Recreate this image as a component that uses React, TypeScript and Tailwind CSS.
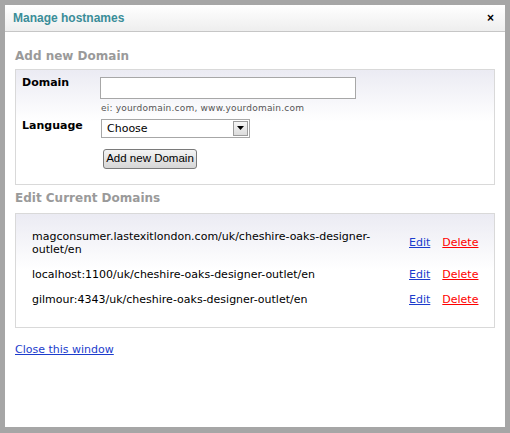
import React, { useState } from 'react';

const domains = [
  'magconsumer.lastexitlondon.com/uk/cheshire-oaks-designer-outlet/en',
  'localhost:1100/uk/cheshire-oaks-designer-outlet/en',
  'gilmour:4343/uk/cheshire-oaks-designer-outlet/en',
];

export default function App() {
  const [domain, setDomain] = useState('');
  const [lang, setLang] = useState('');

  return (
    <div className="w-[510px] h-[433px] bg-[#a6a6a6] pt-[5px] pl-[5px] pr-[5px] pb-[6px] font-['DejaVu_Sans',sans-serif]">
      <div className="h-full bg-white flex flex-col">
        {/* title bar */}
        <div className="h-[27px] shrink-0 flex items-center justify-between pl-[8px] pr-[11px] border-b border-[#c6c6c6] bg-gradient-to-b from-white to-[#eeeeee]">
          <span className="font-['Liberation_Sans',sans-serif] font-bold text-[12px] text-[#3a8d98]">Manage hostnames</span>
          <button className="font-['Liberation_Sans',sans-serif] font-bold text-[12px] leading-none text-black">×</button>
        </div>

        <div className="px-[10px] pt-[16px]">
          <h2 className="font-bold text-[12px] text-[#9a9a9a] leading-[16px]">Add new Domain</h2>

          <div className="mt-[5px] border border-[#d9d9d9] bg-gradient-to-b from-[#ebebf3] via-white via-[45%] to-white pl-[6px] pt-[6px] pb-[15px]">
            <div className="flex">
              <div className="w-[78px] font-bold text-[11px] text-black leading-[14px]">Domain</div>
              <div className="flex flex-col">
                <input
                  value={domain}
                  onChange={(e) => setDomain(e.target.value)}
                  className="w-[256px] h-[22px] mt-[1px] border border-[#a7a7a7] bg-white outline-none px-1 text-[11px]"
                />
                <span className="mt-[3px] ml-[1px] text-[9px] text-[#555] tracking-[0.2px]">ei: yourdomain.com, www.yourdomain.com</span>
              </div>
            </div>

            <div className="flex mt-[3px]">
              <div className="w-[79px] font-bold text-[11px] text-black leading-[14px]">Language</div>
              <div className="flex flex-col">
                <div className="relative w-[149px] h-[19px] border border-[#a7a7a7] bg-white">
                  <select
                    value={lang}
                    onChange={(e) => setLang(e.target.value)}
                    className="appearance-none block w-full h-[17px] py-0 pl-[5px] text-[11px] leading-[17px] text-black bg-transparent outline-none"
                  >
                    <option value="">Choose</option>
                    <option value="en">English</option>
                  </select>
                  <span className="pointer-events-none absolute right-[1px] top-[1px] w-[15px] h-[15px] border border-[#9c9c9c] bg-gradient-to-b from-[#f6f6f6] to-[#dcdcdc] flex items-center justify-center">
                    <svg width="7" height="4" viewBox="0 0 7 4"><path d="M0 0h7L3.5 4z" fill="#000" /></svg>
                  </span>
                </div>
                <button className="mt-[11px] ml-[2px] w-[94px] h-[20px] border border-[#7a7a7a] rounded-[3px] bg-gradient-to-b from-[#f4f4f4] to-[#d6d6d6] font-['Liberation_Sans',sans-serif] text-[11.5px] whitespace-nowrap text-black leading-none">
                  Add new Domain
                </button>
              </div>
            </div>
          </div>

          <h2 className="mt-[5px] font-bold text-[12px] text-[#9a9a9a] leading-[16px]">Edit Current Domains</h2>

          <div className="mt-[7px] border border-[#d9d9d9] bg-gradient-to-b from-[#ebebf3] via-white via-[50%] to-white pl-[16px] pt-[16px] pb-[9px]">
            <table className="border-collapse">
              <tbody>
                {domains.map((d) => (
                  <tr key={d}>
                    <td className="w-[377px] pr-[20px] pb-[12px] text-[11px] text-black leading-[13px] break-words">{d}</td>
                    <td className="pb-[12px] align-middle text-[11px] leading-[13px]">
                      <a href="#" className="text-[#1c3ccc] underline">Edit</a>
                    </td>
                    <td className="pb-[12px] pl-[12px] align-middle text-[11px] leading-[13px]">
                      <a href="#" className="text-[#ff0000] underline">Delete</a>
                    </td>
                  </tr>
                ))}
              </tbody>
            </table>
          </div>

          <a href="#" className="inline-block mt-[15px] text-[11px] text-[#1c3ccc] underline leading-[14px]">Close this window</a>
        </div>
      </div>
    </div>
  );
}
